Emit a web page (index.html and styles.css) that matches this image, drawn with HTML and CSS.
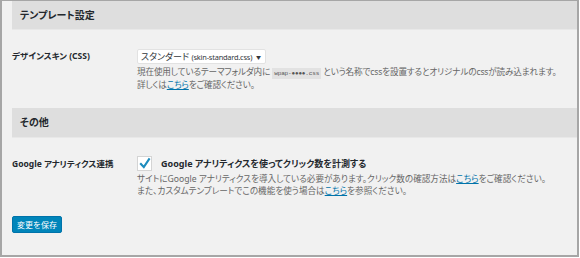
FILE: index.html
```html
<!DOCTYPE html>
<html lang="ja">

<head>
    <meta charset="utf-8">
    <title>テンプレート設定</title>
    <link rel="stylesheet" href="styles.css">
</head>

<body>
    <div class="frame">
        <h2 class="section-title">テンプレート設定</h2>

        <div class="row row-skin">
            <div class="row-label">デザインスキン (CSS)</div>
            <div class="row-field">
                <div class="select">
                    <span class="select-text">スタンダード <small>(skin-standard.css)</small></span>
                    <span class="caret">▼</span>
                </div>
                <p class="description">
                    現在使用しているテーマフォルダ内に <code>wpap-●●●●.css</code> という名称でcssを設置するとオリジナルのcssが読み込まれます。<br>
                    詳しくは<a href="#">こちら</a>をご確認ください。
                </p>
            </div>
        </div>

        <h2 class="section-title section-gap">その他</h2>

        <div class="row row-ga">
            <div class="row-label">Google アナリティクス連携</div>
            <div class="row-field">
                <label class="check">
                    <span class="box">
                        <svg width="15" height="15" viewBox="0 0 15 15">
                            <path d="M3.2 7.2 L6.8 11 L12.6 2.4" fill="none" stroke="#1e8cbe" stroke-width="2.1" />
                        </svg>
                    </span>
                    <span class="check-text">Google アナリティクスを使ってクリック数を計測する</span>
                </label>
                <p class="description">
                    サイトにGoogle アナリティクスを導入している必要があります。クリック数の確認方法は<a href="#">こちら</a>をご確認ください。<br>
                    また、カスタムテンプレートでこの機能を使う場合は<a href="#">こちら</a>を参照ください。
                </p>
            </div>
        </div>

        <button type="button" class="save">変更を保存</button>
    </div>
</body>

</html>
```

FILE: styles.css
```css
body {
    margin: 0;
    background: #fff;
    font-family: "Noto Sans", "Noto Sans CJK JP", sans-serif;
    font-feature-settings: "palt";
    color: #444;
}

.frame {
    width: 579px;
    height: 257px;
    box-sizing: border-box;
    border: 2px solid #a6a6a6;
    border-top-width: 1px;
    background: #f1f1f1;
    padding-left: 10px;
}

.section-title {
    margin: 0;
    height: 28px;
    line-height: 28px;
    padding-left: 8px;
    background: #dedede;
    border-bottom: 1px solid #e8e8e8;
    font-size: 10px;
    font-weight: bold;
    color: #23282d;
}

.section-gap {
    margin-top: 17px;
    height: 29px;
    line-height: 29px;
}

.row {
    display: flex;
}

.row-skin {
    margin-top: 19px;
}

.row-ga {
    margin-top: 18px;
}

.row-label {
    width: 125px;
    flex-shrink: 0;
    font-size: 8.5px;
    font-weight: bold;
    color: #23282d;
    line-height: 14px;
}

.row-ga .row-label {
    line-height: 15px;
}

.select {
    width: 129px;
    height: 15px;
    box-sizing: border-box;
    display: flex;
    justify-content: space-between;
    align-items: center;
    padding: 0 4px 0 3px;
    background: #fff;
    border: 1px solid #e2e2e2;
    border-radius: 2px;
    font-size: 9px;
    color: #32373c;
    white-space: nowrap;
}

.select small {
    font-size: 7.4px;
    letter-spacing: -0.2px;
}

.caret {
    font-size: 5px;
}

.description {
    margin: 3px 0 0;
    font-size: 8.6px;
    line-height: 11.5px;
    color: #666;
}

code {
    font-family: "Liberation Mono", monospace;
    font-size: 6px;
    background: #e2e2e2;
    padding: 2px 2px;
    color: #555;
}

.row-skin .description {
    letter-spacing: -0.15px;
}

a {
    color: #0073aa;
}

.check {
    display: flex;
    align-items: center;
    gap: 9px;
}

.box {
    width: 15px;
    height: 15px;
    box-sizing: border-box;
    background: #fff;
    border: 1px solid #d4d4d4;
    display: flex;
}

.box svg {
    margin: -1px;
}

.check-text {
    font-size: 9px;
    font-weight: bold;
    color: #23282d;
}

.save {
    display: block;
    margin-top: 19px;
    width: 50px;
    height: 17px;
    padding: 0;
    background: #0085ba;
    border: 1px solid #0073aa;
    border-radius: 2px;
    color: #fff;
    font-family: inherit;
    font-size: 8px;
}
```
